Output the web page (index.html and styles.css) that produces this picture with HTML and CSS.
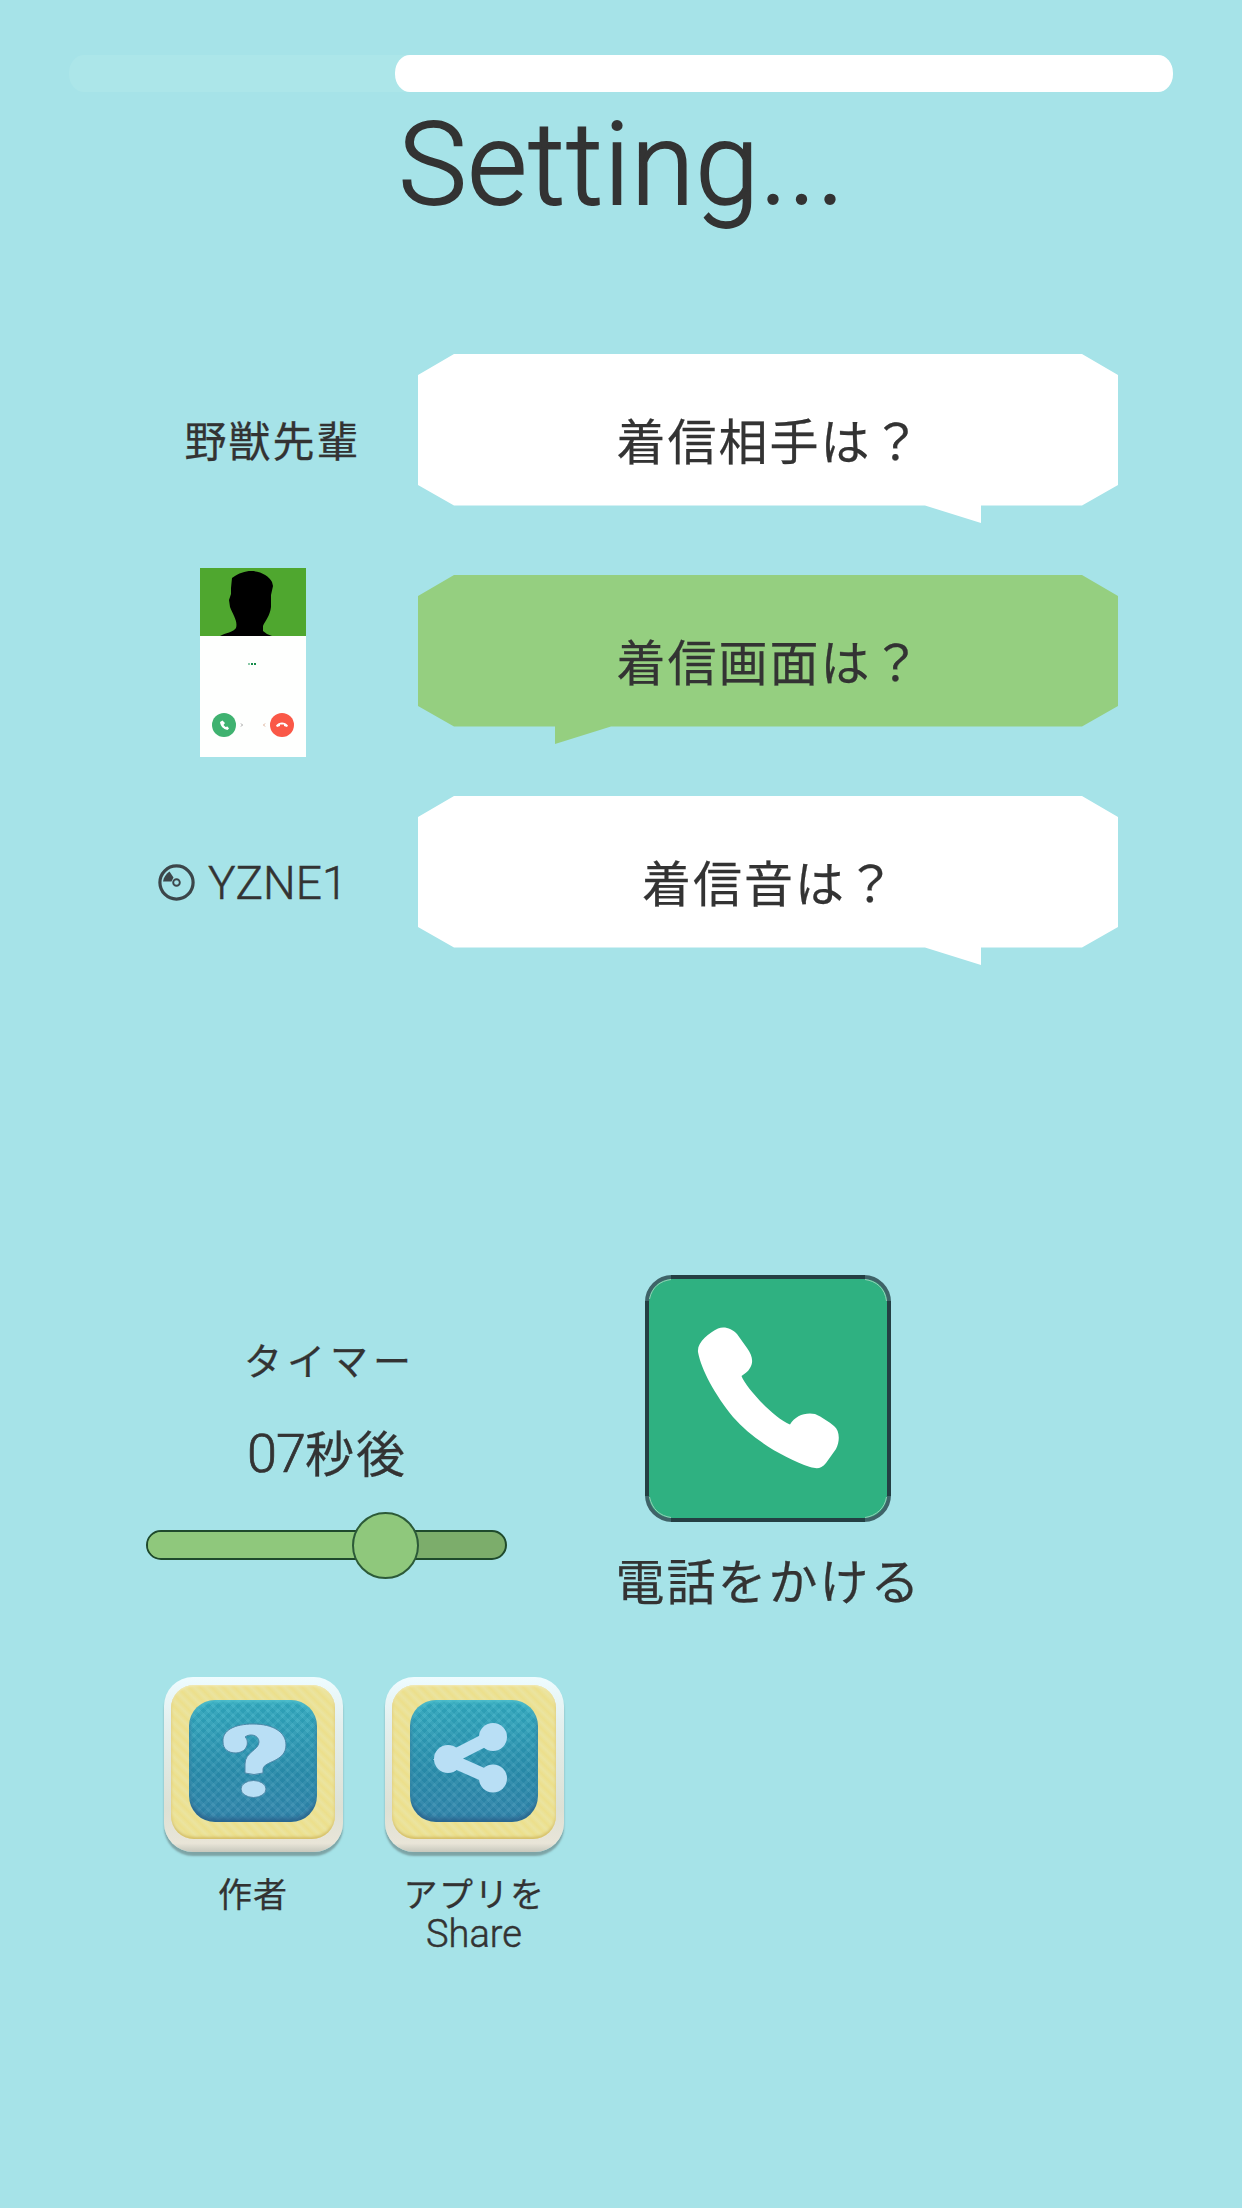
FILE: index.html
```html
<!DOCTYPE html>
<html lang="ja">
<head>
<meta charset="utf-8">
<title>Setting</title>
<link rel="stylesheet" href="styles.css">
</head>
<body>
<main class="screen">
  <header class="header">
    <div class="progress"><div class="progress-fill"></div></div>
    <h1 class="title">Setting...</h1>
  </header>

  <section class="options">
    <div class="row">
      <div class="value name">野獣先輩</div>
      <button class="bubble">
        <svg class="bubble-shape" viewBox="0 0 700 170"><path fill="#fff" d="M36 0H664L700 21V131L664 151.500H563V169L507 151.500H36L0 131V21Z"/></svg>
        <span class="bubble-text">着信相手は？</span>
      </button>
    </div>
    <div class="row">
      <div class="value">
        <svg class="thumb" viewBox="0 0 106 189">
          <path fill="#fefffe" d="M0 0H106V189H0Z"/>
          <path fill="#4fa72f" d="M0 0H106V68H0Z"/>
          <path d="M20 68C25 65 34 64 36 60C38 53 33 47 30 39L29 32L31 26V20L32 10C39 5 45 3 51 3C61 3 69 8 72 14L73 18L71 27V39C70 48 65 53 63 58V63L67 66L72 68Z"/>
          <path fill="#8bc9a8" d="M48 95h2v2h-2z"/><path fill="#168c4b" d="M51 95h2v2h-2zM54 95h2v2h-2z"/>
          <circle cx="24" cy="157" r="12" fill="#3fb270"/>
          <circle cx="82" cy="157" r="12" fill="#fa5847"/>
          <path fill="#fff" d="M20 154L22.500 152.500L25 155L23.500 157L25.500 159L27.500 158.500L29 160.500L27.500 162C23 161 20.500 158 20 154Z"/>
          <path fill="#fff" d="M76 157.500C79 153.500 85 153.500 88 157.500L87 159L84 158V156.500H80V158L77 159Z"/>
          <path fill="none" stroke="#777" stroke-width=".7" d="M41 155.500L42.500 157L41 158.500"/>
          <path fill="none" stroke="#c86" stroke-width=".7" d="M65 155.500L63.500 157L65 158.500"/>
        </svg>
      </div>
      <button class="bubble">
        <svg class="bubble-shape" viewBox="0 0 700 170"><path fill="#95cf80" d="M36 0H664L700 21V131L664 151.500H193L137 169V151.500H36L0 131V21Z"/></svg>
        <span class="bubble-text">着信画面は？</span>
      </button>
    </div>
    <div class="row">
      <div class="value sound">
        <svg class="disc" viewBox="0 0 37 37">
          <g fill="none" stroke="#3c464a"><circle cx="18.500" cy="18.500" r="16.600" stroke-width="3.200"/><circle cx="18.500" cy="18.500" r="3.300" stroke-width="1.900"/></g>
          <path fill="#3c464a" d="M5 17.500C5.500 13.500 8 10 11.500 7.500L15.500 13.500L13.500 17.500Z"/>
        </svg>
        <span class="sound-name">YZNE1</span>
      </div>
      <button class="bubble">
        <svg class="bubble-shape" viewBox="0 0 700 170"><path fill="#fff" d="M36 0H664L700 21V131L664 151.500H563V169L507 151.500H36L0 131V21Z"/></svg>
        <span class="bubble-text">着信音は？</span>
      </button>
    </div>
  </section>

  <section class="actions">
    <div class="timer">
      <div class="timer-label">タイマー</div>
      <div class="timer-value"><span class="digits">07</span>秒後</div>
      <div class="slider"><div class="slider-fill"></div><div class="knob"></div></div>
    </div>
    <div class="call">
      <svg class="call-icon" viewBox="0 0 246 247">
        <rect x="2" y="2" width="242" height="243" rx="25" fill="#2fb181" stroke="#3f6368" stroke-width="4"/>
        <path fill="none" stroke="#93cfb6" stroke-width="1" d="M4.500 24C7 12 15 6 26 4.500M220 4.500C231 6 240 13 241.500 26M4.500 222C7 234 15 241 26 242.500M220 242.500C231 241 240 233 241.500 222"/>
        <path fill="none" stroke="#243f43" stroke-width="4" d="M26 2H220M26 245H220M2 26V221M244 26V221"/>
        <path fill="#fff" d="M53 77C52 67 64 58 73 53.500C80 51 87 54 92 59L102 73C107 80 109 87 105 93C103 97 99 99 96.500 101C101 113 128 142 145 149.500C150 141 160 137 170 139C177 142 184 147 189 151C195 156 195 166 191 174L181 188C176 194 172 194 165 192C139 183 108 165 88 142C70 120 56 94 53 77Z"/>
      </svg>
      <div class="call-label">電話をかける</div>
    </div>
  </section>

  <nav class="links">
    <div class="link">
      <div class="tile"><div class="tile-band"><div class="tile-face">
        <svg class="glyph" viewBox="0 0 128 122">
          <g fill="#b9dff5" stroke="#4d88a8" stroke-width="1">
          <path d="M34 42C33 30 46 24 64 24C84 24 97 32 97 45C97 62 75 61 74 69V73Q65 76 56 73V64C56 52 70 50 70 42C70 35 61 33 56 37C60 40 60 52 47 53C39 53 34 49 34 42Z"/>
          <ellipse cx="64.500" cy="89" rx="12.500" ry="8.500"/></g>
        </svg>
      </div></div></div>
      <div class="link-label">作者</div>
    </div>
    <div class="link">
      <div class="tile"><div class="tile-band"><div class="tile-face">
        <svg class="glyph" viewBox="0 0 128 122">
          <path stroke="#b9dff5" stroke-width="13" fill="none" d="M83 36L38 59L83 79"/>
          <circle cx="83" cy="37" r="14" fill="#b9dff5"/><circle cx="38" cy="59" r="14" fill="#b9dff5"/><circle cx="83" cy="78.500" r="14" fill="#b9dff5"/>
        </svg>
      </div></div></div>
      <div class="link-label"><span class="kana">アプリを</span><span class="latin">Share</span></div>
    </div>
  </nav>
</main>
</body>
</html>
```
FILE: styles.css
```css
* { box-sizing: border-box; }
body { margin: 0; background: #a6e3e8; color: #333; font-family: "Noto Sans CJK JP", sans-serif; -webkit-text-stroke: .25px #333; }
.screen { width: 1242px; height: 2208px; overflow: hidden; }
svg { display: block; }
.header { height: 354px; padding: 55px 69px 0; }
.progress { height: 37px; border-radius: 15px / 18px; background: #ace6e9; display: flex; justify-content: flex-end; }
.progress-fill { width: 778px; border-radius: 15px / 18px; background: #fff; }
.title { margin: 8px 0 0; padding-left: 2px; font: 300 115px/130px Roboto, sans-serif; letter-spacing: 1px; text-align: center; -webkit-text-stroke: 1.8px #333; }
.row { height: 220.8px; display: flex; padding-left: 88px; }
.value { width: 330px; height: 189px; display: flex; justify-content: center; align-items: center; }
.name { height: 169px; padding-left: 39px; font-size: 42px; letter-spacing: 2px; }
.thumb { width: 106px; height: 189px; margin-top: -14px; }
.row .value:has(.thumb) { align-items: flex-start; margin-top: 7px; }
.sound { height: 174px; justify-content: flex-start; padding-left: 70px; gap: 13px; }
.disc { width: 37px; height: 37px; }
.sound-name { font: 300 46px/50px Roboto, sans-serif; -webkit-text-stroke: .5px #333; }
.bubble { width: 700px; height: 170px; padding: 0; border: 0; background: none; color: inherit; display: grid; }
.bubble-shape, .bubble-text { grid-area: 1 / 1; }
.bubble-shape { width: 700px; height: 170px; }
.bubble-text { padding-left: 3px; font: 400 49px/170px "Noto Sans CJK JP", sans-serif; letter-spacing: 2px; text-align: center; }
.actions { display: flex; margin-top: 258.600px; height: 402px; }
.timer { width: 507px; padding: 56px 0 0 146px; }
.timer-label { font-size: 38px; line-height: 56px; letter-spacing: 5px; padding-left: 98px; }
.timer-value { font-size: 49px; line-height: 72px; letter-spacing: 2px; margin-top: 28px; padding-left: 101px; white-space: nowrap; }
.digits { font: 300 54px/60px Roboto, sans-serif; letter-spacing: -1px; -webkit-text-stroke: .7px #333; }
.slider { margin-top: 43px; height: 30px; border: 2px solid #1f4a2c; border-radius: 15px; background: #7cad6b; position: relative; }
.slider-fill { width: 240px; height: 26px; border-radius: 13px 0 0 13px; background: #8fc87c; }
.knob { position: absolute; left: 204px; top: -20px; width: 67px; height: 67px; border: 2px solid #2c5a38; border-radius: 50%; background: #8fc87c; }
.call { margin-left: 106px; width: 310px; display: flex; flex-direction: column; align-items: center; }
.call-icon { width: 246px; height: 247px; }
.call-label { margin-top: 21px; padding-left: 1px; font-size: 49px; line-height: 72px; letter-spacing: 2px; white-space: nowrap; }
.links { display: flex; gap: 41px; padding-left: 163px; }
.link { width: 180px; display: flex; flex-direction: column; align-items: center; }
.tile { width: 179px; height: 175px; padding: 8px 7.5px 13px; border-radius: 29px; background: linear-gradient(#eefcff, #e4f0ef 25%, #dde1d5 75%, #e9e5d8 95%, #c7c8bd); box-shadow: 0 4px 2px #7da4a6; }
.tile-band { height: 154px; padding: 15px 18px; border-radius: 23px; background: repeating-linear-gradient(45deg, #ecdf8b, #ebe4a0 4px, #ecdf8b 8px); box-shadow: inset 0 -2px 3px #d4bd65, inset 0 1px 2px #f4edbd; }
.tile-face { height: 122px; border-radius: 26px; background: repeating-linear-gradient(45deg, #ffffff0b 0 3px, #00507010 3px 7px), repeating-linear-gradient(-45deg, #ffffff0b 0 3px, #00507010 3px 7px), linear-gradient(#35aec2, #2d8fae 60%, #3486ad); box-shadow: inset 0 -4px 4px #2b668f, inset 0 2px 3px #51c0cd; }
.glyph { width: 128px; height: 122px; }
.link-label { margin-top: 21px; font-size: 34px; line-height: 40px; letter-spacing: 1px; text-align: center; display: flex; flex-direction: column; align-items: center; }
.kana { padding-left: 1px; letter-spacing: 1.5px; white-space: nowrap; }
.latin { font: 300 38px/43px Roboto, sans-serif; letter-spacing: 0; -webkit-text-stroke: .5px #333; }
```
